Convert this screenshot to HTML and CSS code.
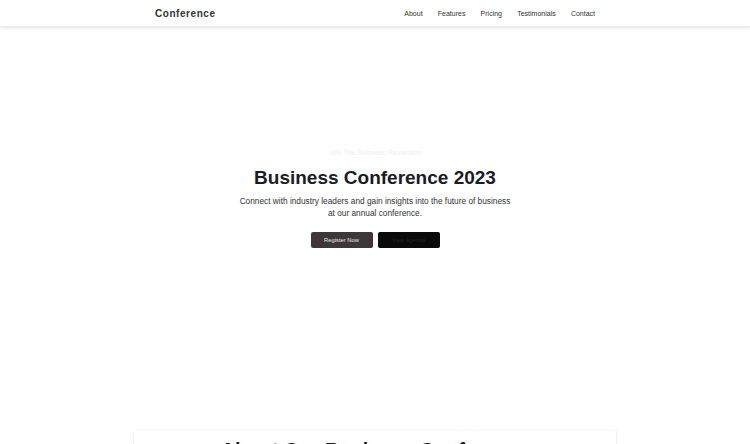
FILE: index.html
```html
<!DOCTYPE html>
<html lang="en">
<head>
<meta charset="utf-8">
<title>Conference</title>
<link rel="stylesheet" href="styles.css">
</head>
<body>
<header class="nav">
  <div class="nav-inner">
    <div class="logo">Conference</div>
    <nav class="links">
      <a href="#">About</a>
      <a href="#">Features</a>
      <a href="#">Pricing</a>
      <a href="#">Testimonials</a>
      <a href="#">Contact</a>
    </nav>
  </div>
</header>
<section class="hero">
  <p class="eyebrow">Join The Business Revolution</p>
  <h1 class="title">Business Conference 2023</h1>
  <p class="sub">Connect with industry leaders and gain insights into the future of business<br>at our annual conference.</p>
  <div class="actions">
    <a class="btn btn-primary" href="#">Register Now</a>
    <a class="btn btn-dark" href="#">View Agenda</a>
  </div>
</section>
<section class="about">
  <div class="card">
    <h2 class="about-title">About Our Business Conference</h2>
  </div>
</section>
</body>
</html>
```
FILE: styles.css
```css
* { box-sizing: border-box; }
html, body { margin: 0; padding: 0; }
body {
  font-family: "Liberation Sans", Arial, sans-serif;
  background: #fff;
  color: #1a1a22;
  overflow: hidden;
  height: 444px;
}
.nav {
  height: 27px;
  background: #fff;
  box-shadow: 0 1px 3px rgba(0,0,0,0.12);
  border-bottom: 1px solid #ececec;
  position: relative;
  z-index: 2;
}
.nav-inner {
  width: 440px;
  margin: 0 auto;
  height: 26px;
  display: flex;
  align-items: center;
  justify-content: space-between;
}
.logo {
  font-size: 10px;
  font-weight: bold;
  letter-spacing: 0.55px;
  color: #333;
}
.links {
  display: flex;
  gap: 15.2px;
}
.links a {
  font-size: 7px;
  color: #333;
  text-decoration: none;
}
.hero {
  height: 343px;
  display: flex;
  flex-direction: column;
  align-items: center;
  justify-content: center;
  text-align: center;
}
.eyebrow {
  margin: 0 0 11px;
  font-size: 7px;
  color: #eeeeee;
}
.title {
  margin: 0 0 7px;
  font-size: 19px;
  font-weight: bold;
  color: #1a1b24;
  line-height: 22px;
}
.sub {
  margin: 0 0 13px;
  font-size: 8.3px;
  line-height: 11.5px;
  color: #333;
}
.actions {
  display: flex;
  gap: 5px;
}
.btn {
  width: 62px;
  height: 16px;
  border-radius: 2px;
  font-size: 5.8px;
  display: flex;
  align-items: center;
  justify-content: center;
  text-decoration: none;
}
.btn-primary {
  background: #3e3638;
  color: #e8e8e8;
}
.btn-dark {
  background: #0a0a0a;
  color: #222;
}
.about {
  padding-top: 61px;
}
.card {
  width: 484px;
  margin: 0 auto;
  height: 14px;
  overflow: hidden;
  text-align: center;
  box-shadow: 0 0 3px rgba(0,0,0,0.06);
  border-left: 1px solid #f2f2f2;
  border-right: 1px solid #f2f2f2;
}
.about-title {
  margin: 7px 0 0;
  font-size: 20px;
  font-weight: bold;
  color: #1a1b24;
  line-height: 24px;
}
```
